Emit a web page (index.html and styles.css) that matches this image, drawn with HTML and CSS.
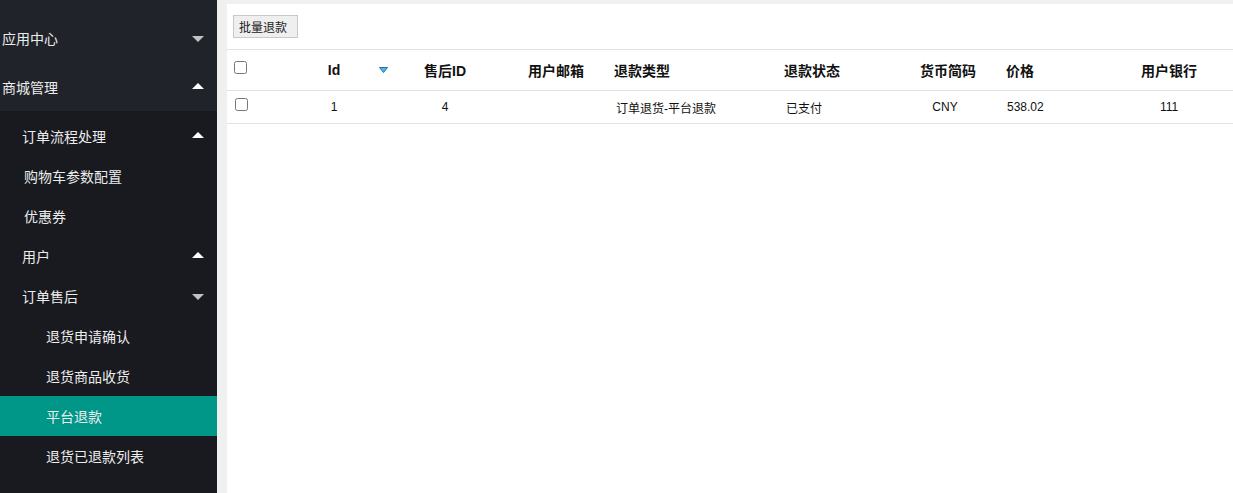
FILE: index.html
```html
<!DOCTYPE html>
<html lang="zh-CN">
<head>
    <meta charset="UTF-8">
    <title>平台退款</title>
    <link rel="stylesheet" href="styles.css">
</head>
<body>
    <aside class="side">
        <ul class="nav-top">
            <li class="item"><span>应用中心</span><i class="arrow down"></i></li>
            <li class="item"><span>商城管理</span><i class="arrow up"></i></li>
        </ul>
        <ul class="nav-sub">
            <li class="item lv2"><span>订单流程处理</span><i class="arrow up"></i></li>
            <li class="item lv2 pad"><span>购物车参数配置</span></li>
            <li class="item lv2 pad"><span>优惠券</span></li>
            <li class="item lv2"><span>用户</span><i class="arrow up"></i></li>
            <li class="item lv2"><span>订单售后</span><i class="arrow down"></i></li>
            <li class="item lv3"><span>退货申请确认</span></li>
            <li class="item lv3"><span>退货商品收货</span></li>
            <li class="item lv3 active"><span>平台退款</span></li>
            <li class="item lv3"><span>退货已退款列表</span></li>
        </ul>
    </aside>

    <main class="main">
        <div class="panel">
            <div class="toolbar">
                <button class="btn">批量退款</button>
            </div>

            <div class="grid head">
                <div class="cell chk"><input type="checkbox"></div>
                <div class="cell c">Id</div>
                <div class="cell sort">
                    <svg width="9" height="6" viewBox="0 0 9 6">
                        <polygon points="0.5,0.5 8.5,0.5 4.5,5.5" fill="#4fb8ee" stroke="#1f6fa8" stroke-width="1"/>
                    </svg>
                </div>
                <div class="cell c">售后ID</div>
                <div class="cell c">用户邮箱</div>
                <div class="cell l">退款类型</div>
                <div class="cell l">退款状态</div>
                <div class="cell c">货币简码</div>
                <div class="cell l price">价格</div>
                <div class="cell c">用户银行</div>
            </div>

            <div class="grid row">
                <div class="cell chk"><input type="checkbox"></div>
                <div class="cell c">1</div>
                <div class="cell sort"></div>
                <div class="cell c">4</div>
                <div class="cell c"></div>
                <div class="cell l">订单退货-平台退款</div>
                <div class="cell l">已支付</div>
                <div class="cell c cur">CNY</div>
                <div class="cell l price">538.02</div>
                <div class="cell c">111</div>
            </div>
        </div>
    </main>
</body>
</html>
```

FILE: styles.css
```css
* {
    box-sizing: border-box;
}

html, body {
    height: 100%;
}

body {
    margin: 0;
    display: flex;
    background: #f0f0f0;
    font-family: 'Liberation Sans', 'Noto Sans CJK SC', sans-serif;
    overflow: hidden;
}

ul {
    list-style: none;
    margin: 0;
    padding: 0;
}

/* 左侧菜单 */
.side {
    width: 217px;
    flex-shrink: 0;
    background: #191a20;
    color: #ececec;
    font-size: 14px;
}

.nav-top {
    background: #21232b;
    padding-top: 13px;
}

.nav-sub {
    padding-top: 5px;
}

.item {
    display: flex;
    align-items: center;
    justify-content: space-between;
    padding-right: 13px;
}

.nav-top .item {
    height: 49px;
    padding-left: 2px;
}

.lv2, .lv3 {
    height: 40px;
}

.lv2 {
    padding-left: 22px;
}

.lv2.pad {
    padding-left: 24px;
}

.lv3 {
    padding-left: 46px;
}

.active {
    background: #009688;
}

.arrow {
    width: 0;
    height: 0;
    border-left: 6px solid transparent;
    border-right: 6px solid transparent;
}

.arrow.down {
    border-top: 6px solid #c2c2c2;
    margin-top: 2px;
}

.arrow.up {
    border-bottom: 6px solid #fff;
    margin-top: -2px;
}

/* 主体 */
.main {
    flex: 1;
    padding: 4px 0 0 10px;
}

.panel {
    background: #fff;
    height: 100%;
}

.toolbar {
    padding: 11px 6px 11px 6px;
    height: 45px;
}

.btn {
    height: 23px;
    width: 65px;
    padding: 0 5px;
    font-family: inherit;
    font-size: 12px;
    color: #222;
    background: #efefef;
    border: 1px solid #c8c8c8;
    text-align: left;
}

.grid {
    display: grid;
    grid-template-columns: 63px 88px 12px 110px 112px 170px 118px 96px 114px 118px 1fr;
    align-items: center;
    border-top: 1px solid #e2e2e2;
    color: #111;
}

.head {
    height: 41px;
    font-size: 14px;
    font-weight: bold;
}

.row {
    height: 34px;
    font-size: 12px;
    border-bottom: 1px solid #e2e2e2;
}

.cell {
    white-space: nowrap;
}

.c {
    text-align: center;
}

.l {
    padding-left: 2px;
}

.row .l {
    padding-left: 4px;
}

.head .price {
    padding-left: 10px;
}

.row .price {
    padding-left: 11px;
}

.row .cur {
    padding-right: 6px;
}

.chk {
    padding-left: 7px;
    display: flex;
}

.row .chk {
    padding-left: 8px;
}

.chk input {
    margin: 0;
    width: 13px;
    height: 13px;
}

.head .chk {
    margin-top: -5px;
}

.row .chk {
    margin-top: -5px;
}

.sort {
    display: flex;
    padding-left: 1px;
    margin-top: -1px;
}
```
